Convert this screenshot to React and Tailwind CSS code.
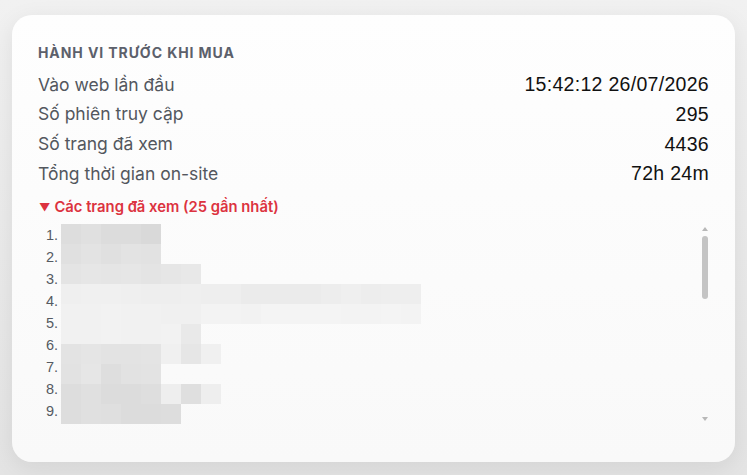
const stats = [
  { label: 'Vào web lần đầu', value: '15:42:12 26/07/2026' },
  { label: 'Số phiên truy cập', value: '295' },
  { label: 'Số trang đã xem', value: '4436' },
  { label: 'Tổng thời gian on-site', value: '72h 24m' },
]

// pixelated (blurred) page urls, one row = 20px strip, one cell = 20px
const mosaic = [
  ['dddddd', 'e0e0e0', 'dcdcdc', 'dcdcdc', 'd9d9d9'],
  ['e0e0e0', 'e3e3e3', 'e0e0e0', 'e3e3e3', 'e2e2e2'],
  ['e4e4e4', 'e6e6e6', 'e5e5e5', 'e6e6e6', 'e4e4e4', 'e6e6e6', 'e8e8e8'],
  ['efefef', 'f0f0f0', 'f0f0f0', 'efefef', 'eeeeee', 'eeeeee', 'efefef', 'eeeeee', 'eeeeee', 'ebebeb', 'ebebeb', 'ebebeb', 'ebebeb', 'ededed', 'efefef', 'ededed', 'eeeeee', 'eeeeee'],
  ['f1f1f1', 'f1f1f1', 'f2f2f2', 'f1f1f1', 'f1f1f1', 'f0f0f0', 'f0f0f0', 'f3f3f3', 'f3f3f3', 'f2f2f2', 'f4f4f4', 'f4f4f4', 'f4f4f4', 'f4f4f4', 'f3f3f3', 'f3f3f3', 'f4f4f4', 'f3f3f3'],
  ['f1f1f1', 'f1f1f1', 'f2f2f2', 'f1f1f1', 'f1f1f1', 'f2f2f2', 'e9e9e9'],
  ['e3e3e3', 'e5e5e5', 'e3e3e3', 'e3e3e3', 'e4e4e4', 'f0f0f0', 'e6e6e6', 'f0f0f0'],
  ['e2e2e2', 'e6e6e6', 'dedede', 'e2e2e2', 'e3e3e3'],
  ['dddddd', 'e0e0e0', 'dcdcdc', 'dcdcdc', 'dedede', 'eeeeee', 'dfdfdf', 'eeeeee'],
  ['dddddd', 'e0e0e0', 'dfdfdf', 'dcdcdc', 'dcdcdc', 'dddddd'],
]

const Mosaic = () => (
  <svg width="360" height="200" className="block shrink-0">
    {mosaic.map((row, r) =>
      row.map((c, i) => (
        <rect key={r + '-' + i} x={i * 20} y={r * 20} width="20" height="20" fill={'#' + c} />
      ))
    )}
  </svg>
)

export default function App() {
  return (
    <div className="h-screen w-full bg-gradient-to-b from-[#f1f1f1] to-[#e4e4e4] pt-[15px] pl-[12px] pr-[12px] font-['Inter',sans-serif]">
      <div className="w-[723px] h-[447px] rounded-[20px] bg-gradient-to-b from-[#fefefe] to-[#f9f9f9] shadow-[0_6px_24px_rgba(0,0,0,0.08)] px-[26px] pt-[28px]">
        <h3 className="text-[14px] leading-[20px] font-bold tracking-[0.065em] text-[#5c606b] uppercase">Hành vi trước khi mua</h3>

        <div className="mt-[7px]">
          {stats.map((s) => (
            <div key={s.label} className="h-[29.7px] flex items-center justify-between">
              <span className="text-[17.5px] text-[#53575e]">{s.label}</span>
              <span className="text-[19.5px] tracking-[0.3px] text-[#111111] font-['Liberation_Sans',Arial,sans-serif]">{s.value}</span>
            </div>
          ))}
        </div>

        <div className="mt-[8px] h-[20px] flex items-center text-[14.8px] font-semibold text-[#dc3340]">
          <span className="text-[11px] ml-[1px] mr-[4px]">▼</span>
          <span>Các trang đã xem (25 gần nhất)</span>
        </div>

        <div className="mt-[6px] h-[203px] flex">
          <div className="flex-1 flex pt-[1px] overflow-hidden">
            <div className="w-[20px] text-right text-[14.5px] leading-[22px] text-[#555a62] font-['Liberation_Sans',Arial,sans-serif]">
              {[1, 2, 3, 4, 5, 6, 7, 8, 9].map((n) => (
                <div key={n}>{n}.</div>
              ))}
            </div>
            <div className="ml-[3px]">
              <Mosaic />
            </div>
          </div>
          <div className="w-[12px] flex flex-col items-center pt-[4px] pb-[5px] mr-[-2px]">
            <div className="w-0 h-0 border-l-[3.5px] border-r-[3.5px] border-b-[4px] border-l-transparent border-r-transparent border-b-[#b8b8b8]" />
            <div className="mt-[5px] w-[6px] h-[63px] rounded-full bg-[#c4c4c4]" />
            <div className="flex-1" />
            <div className="w-0 h-0 border-l-[3.5px] border-r-[3.5px] border-t-[4px] border-l-transparent border-r-transparent border-t-[#b8b8b8]" />
          </div>
        </div>
      </div>
    </div>
  )
}
